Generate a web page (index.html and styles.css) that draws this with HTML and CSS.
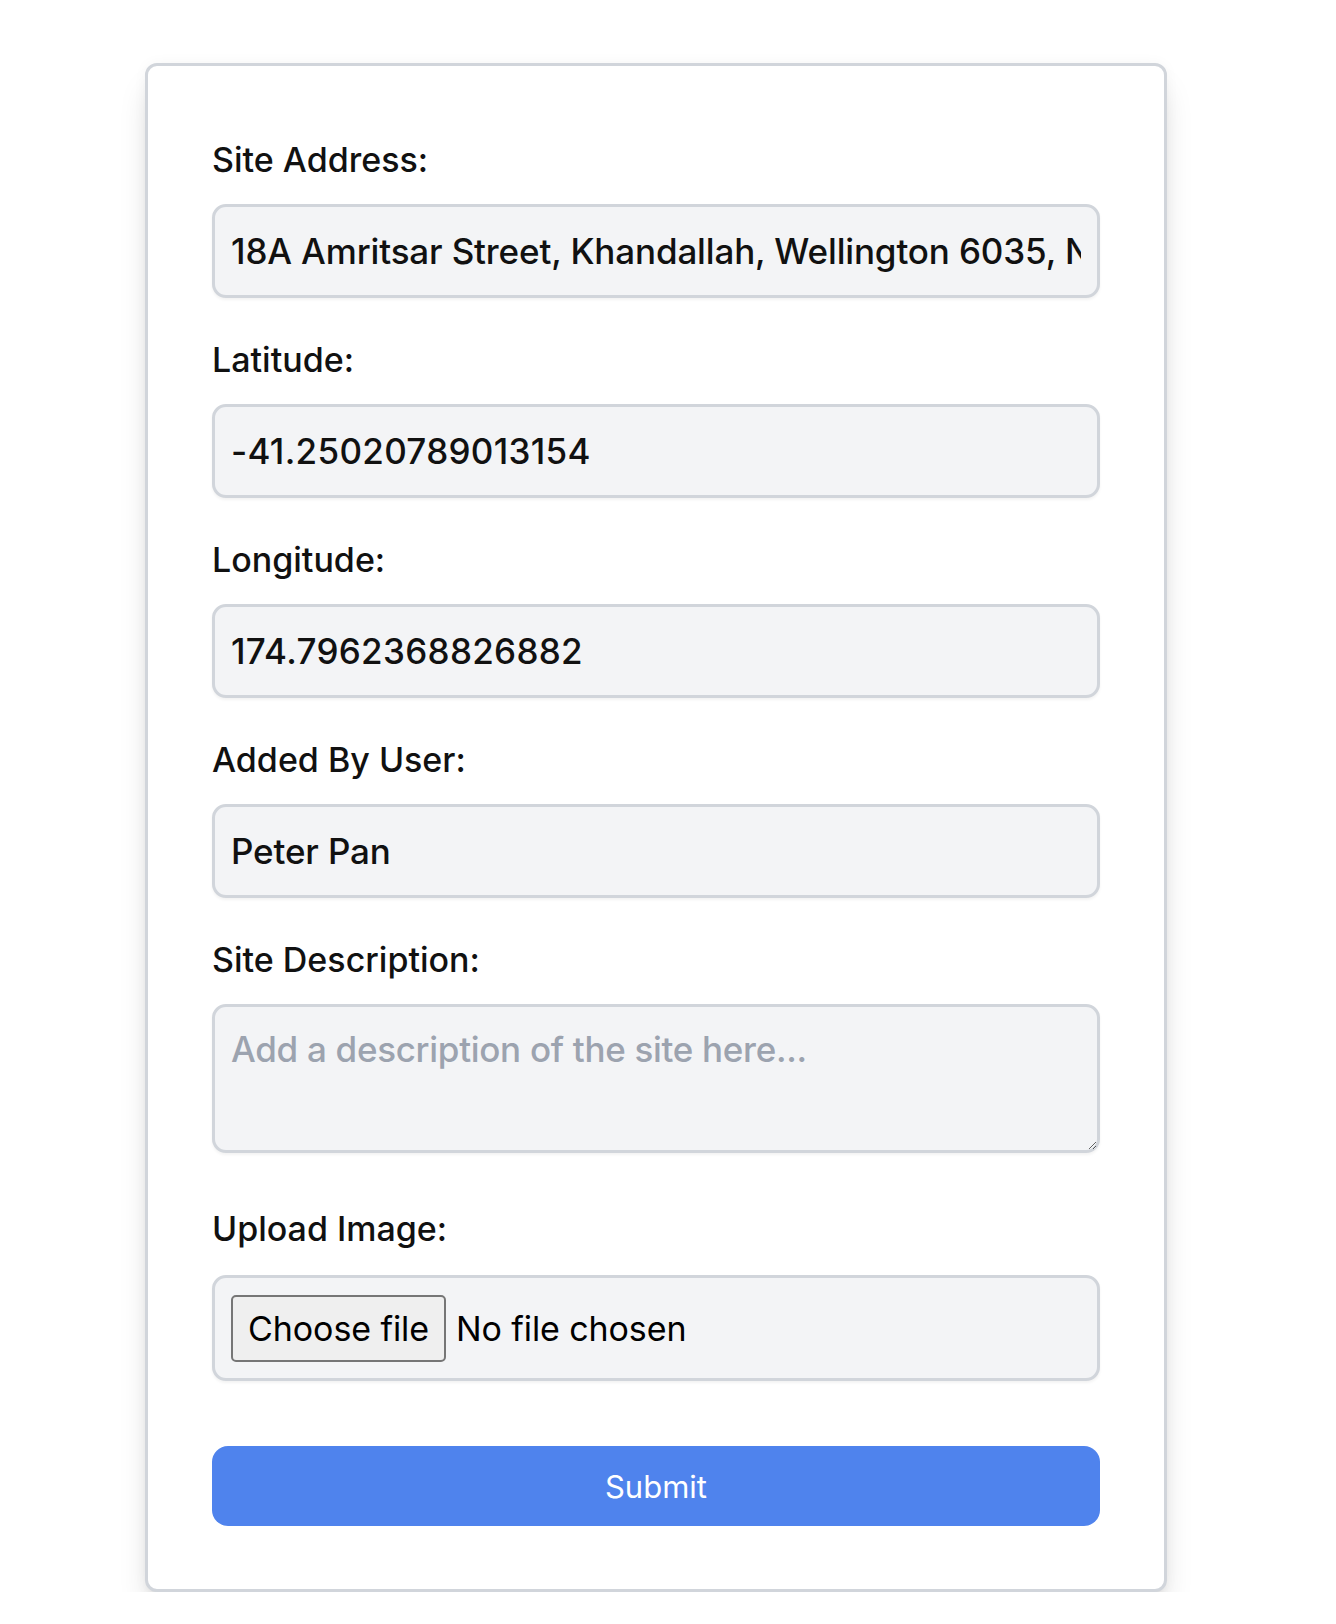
FILE: index.html
```html
<!DOCTYPE html>
<html lang="en">
<head>
<meta charset="utf-8">
<title>Add Site</title>
<link rel="stylesheet" href="styles.css">
</head>
<body>
<div class="card">
  <form class="form">
    <div class="field">
      <label class="label">Site Address:</label>
      <input class="control" type="text" value="18A Amritsar Street, Khandallah, Wellington 6035, New Zealand">
    </div>
    <div class="field">
      <label class="label">Latitude:</label>
      <input class="control num" type="text" value="-41.25020789013154">
    </div>
    <div class="field">
      <label class="label">Longitude:</label>
      <input class="control num" type="text" value="174.7962368826882">
    </div>
    <div class="field">
      <label class="label">Added By User:</label>
      <input class="control" type="text" value="Peter Pan">
    </div>
    <div class="field field-desc">
      <label class="label">Site Description:</label>
      <textarea class="control area" placeholder="Add a description of the site here..."></textarea>
    </div>
    <div class="field field-file">
      <label class="label">Upload Image:</label>
      <div class="control file">
        <span class="file-btn">Choose file</span>
        <span class="file-name">No file chosen</span>
      </div>
    </div>
    <button class="submit" type="button">Submit</button>
  </form>
</div>
</body>
</html>
```

FILE: styles.css
```css
html, body {
  margin: 0;
  padding: 0;
  background: #ffffff;
}

body {
  font-family: Inter, "Liberation Sans", sans-serif;
  color: #111111;
}

.card {
  box-sizing: border-box;
  width: 1022px;
  margin: 63px 0 0 145px;
  border: 3px solid #d1d5db;
  border-radius: 12px;
  padding: 70px 64px 63px;
  background: #ffffff;
  box-shadow: 0 22px 32px -6px rgba(0, 0, 0, 0.15), 0 8px 12px -8px rgba(0, 0, 0, 0.12), 0 0 14px rgba(0, 0, 0, 0.04);
}

.form {
  display: flex;
  flex-direction: column;
}

.field {
  display: flex;
  flex-direction: column;
  margin-bottom: 38px;
}

.field-desc {
  margin-bottom: 52px;
}

.field-file {
  margin-bottom: 65px;
}

.label {
  display: block;
  font-size: 34px;
  line-height: 48px;
  font-weight: 500;
  color: #111111;
  margin-bottom: 20px;
}

.field-file .label {
  margin-bottom: 22px;
}

.control {
  box-sizing: border-box;
  width: 100%;
  height: 94px;
  margin: 0;
  padding: 0 16px;
  border: 3px solid #d1d5db;
  border-radius: 14px;
  background: #f3f4f6;
  font-family: Inter, "Liberation Sans", sans-serif;
  font-size: 35px;
  letter-spacing: -0.15px;
  font-weight: 500;
  color: #111111;
  box-shadow: 0 2px 3px rgba(0, 0, 0, 0.05);
  outline: none;
}

.num {
  letter-spacing: 0.3px;
}

.area {
  display: block;
  height: 149px;
  padding: 21px 16px;
  line-height: normal;
  letter-spacing: -0.3px;
  resize: vertical;
}

.area::placeholder {
  color: #9ca3af;
  opacity: 1;
}

.file {
  height: 106px;
  display: flex;
  align-items: center;
  gap: 10px;
  padding: 0 16px;
  font-size: 34px;
  letter-spacing: -0.1px;
}

.file-btn {
  box-sizing: border-box;
  height: 67px;
  width: 215px;
  display: flex;
  align-items: center;
  justify-content: center;
  border: 2px solid #767676;
  border-radius: 5px;
  background: #efefef;
  font-weight: 400;
  color: #000000;
}

.file-name {
  font-weight: 400;
  color: #000000;
}

.submit {
  box-sizing: border-box;
  width: 100%;
  height: 80px;
  border: none;
  border-radius: 16px;
  background: #4f83ed;
  color: #ffffff;
  font-family: Inter, "Liberation Sans", sans-serif;
  font-size: 31px;
  font-weight: 400;
  cursor: pointer;
}
```
